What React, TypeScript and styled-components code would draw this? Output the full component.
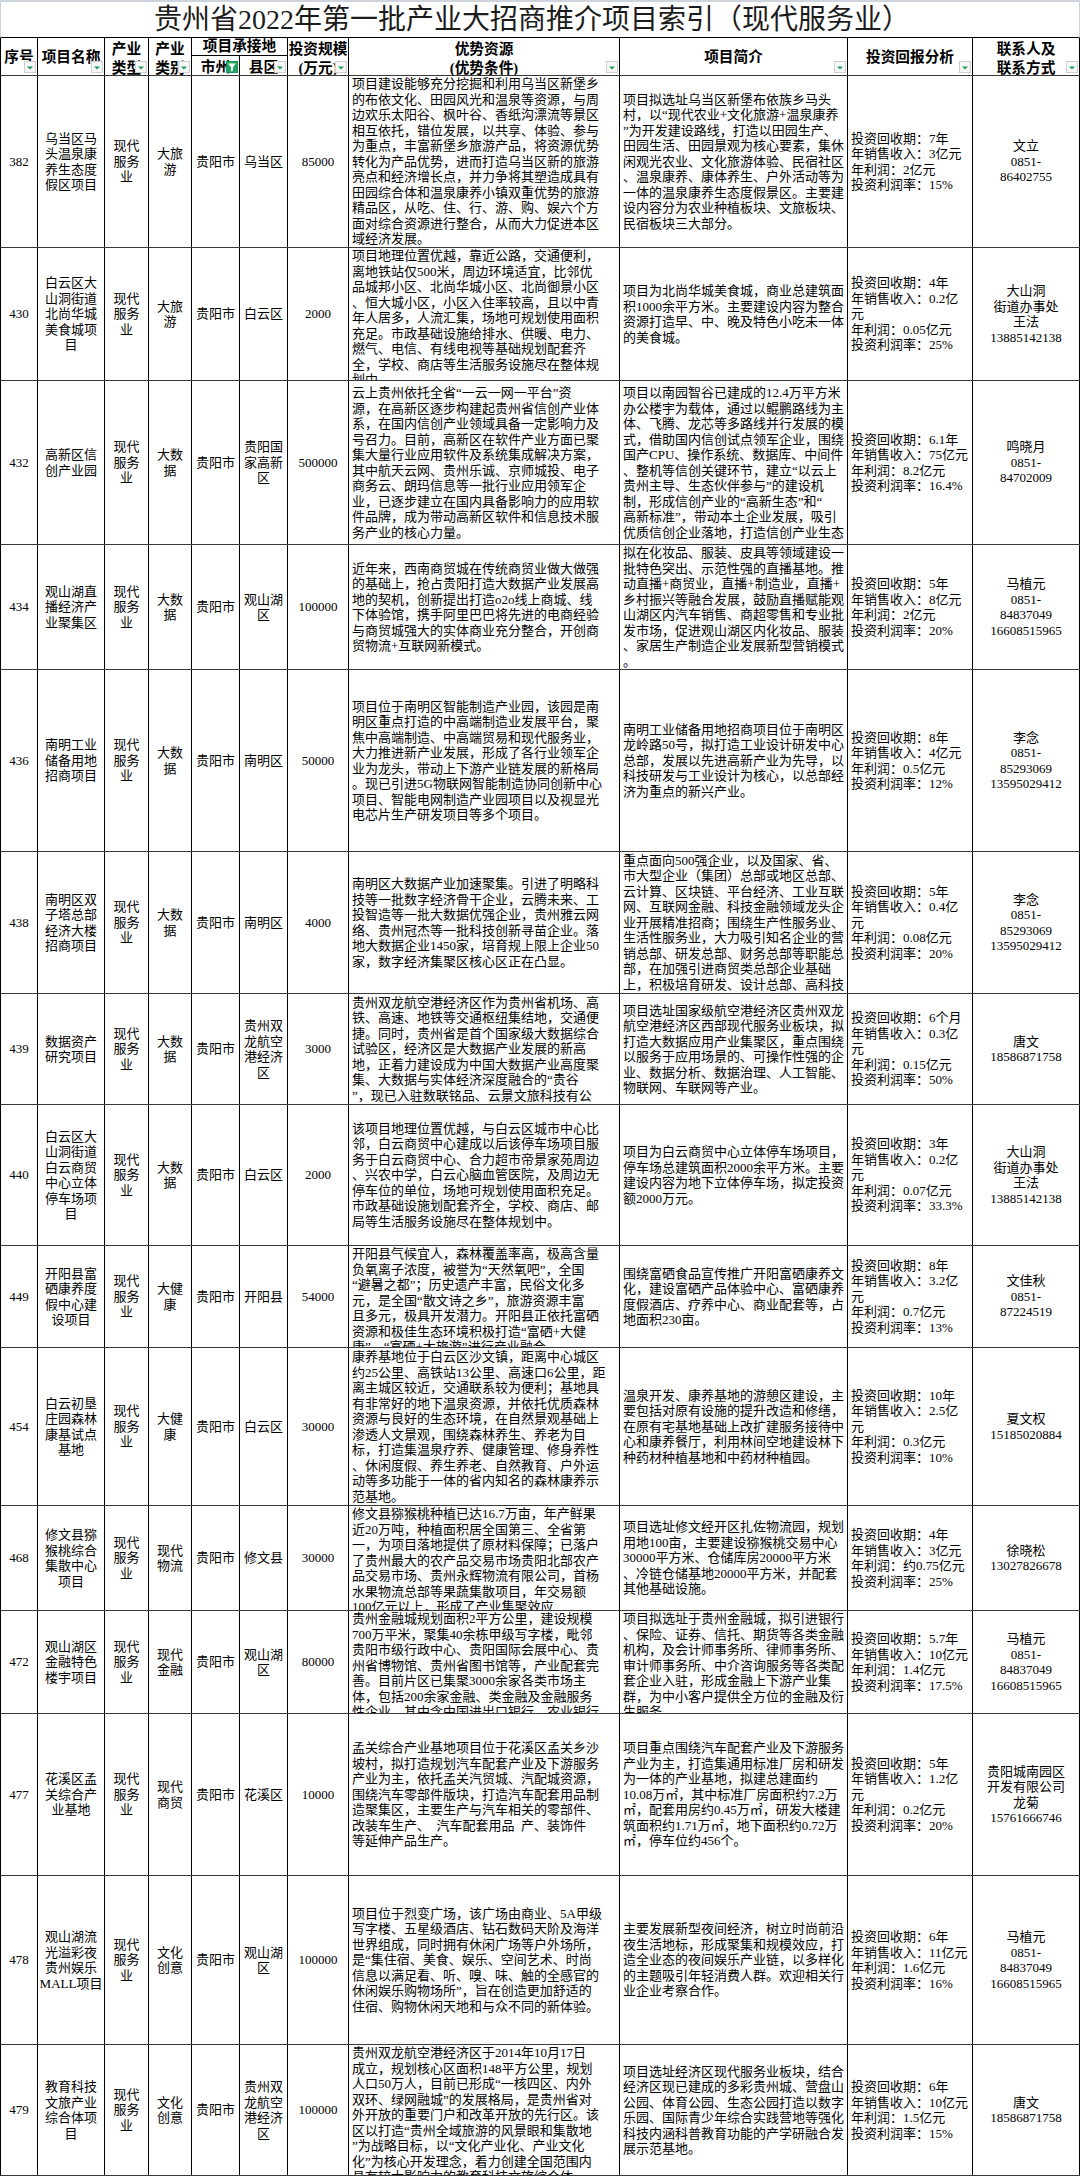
import React from 'react';
import styled, { createGlobalStyle } from 'styled-components';

const GlobalStyle = createGlobalStyle`
  html, body {
    margin: 0;
    padding: 0;
    background: #fff;
  }
  body {
    font-family: "Liberation Serif", "Noto Sans CJK SC", serif;
    color: #000;
  }
`;

const COLS = '37px 67px 44px 43px 48px 48px 61px 271px 228px 125px 107px';

interface RowData {
  no: string;
  h: number;
  name: string;
  type: string;
  cat: string;
  city: string;
  county: string;
  scale: string;
  adv: string[];
  intro: string[];
  ret: string[];
  contact: string;
}

const SVC = '现代\n服务\n业';

const rows: RowData[] = [
  {
    no: '382', h: 172, name: '乌当区马\n头温泉康\n养生态度\n假区项目', type: SVC, cat: '大旅\n游',
    city: '贵阳市', county: '乌当区', scale: '85000',
    adv: [
      '项目建设能够充分挖掘和利用乌当区新堡乡',
      '的布依文化、田园风光和温泉等资源，与周',
      '边欢乐太阳谷、枫叶谷、香纸沟漂流等景区',
      '相互依托，错位发展，以共享、体验、参与',
      '为重点，丰富新堡乡旅游产品，将资源优势',
      '转化为产品优势，进而打造乌当区新的旅游',
      '亮点和经济增长点，并力争将其塑造成具有',
      '田园综合体和温泉康养小镇双重优势的旅游',
      '精品区，从吃、住、行、游、购、娱六个方',
      '面对综合资源进行整合，从而大力促进本区',
      '域经济发展。',
    ],
    intro: [
      '项目拟选址乌当区新堡布依族乡马头',
      '村，以“现代农业+文化旅游+温泉康养',
      '”为开发建设路线，打造以田园生产、',
      '田园生活、田园景观为核心要素，集休',
      '闲观光农业、文化旅游体验、民宿社区',
      '、温泉康养、康体养生、户外活动等为',
      '一体的温泉康养生态度假景区。主要建',
      '设内容分为农业种植板块、文旅板块、',
      '民宿板块三大部分。',
    ],
    ret: ['投资回收期：7年', '年销售收入：3亿元', '年利润：2亿元', '投资利润率：15%'],
    contact: '文立\n0851-\n86402755',
  },
  {
    no: '430', h: 133, name: '白云区大\n山洞街道\n北尚华城\n美食城项\n目', type: SVC, cat: '大旅\n游',
    city: '贵阳市', county: '白云区', scale: '2000',
    adv: [
      '项目地理位置优越，靠近公路，交通便利，',
      '离地铁站仅500米，周边环境适宜，比邻优',
      '品城邦小区、北尚华城小区、北尚御景小区',
      '、恒大城小区，小区入住率较高，且以中青',
      '年人居多，人流汇集，场地可规划使用面积',
      '充足。市政基础设施给排水、供暖、电力、',
      '燃气、电信、有线电视等基础规划配套齐',
      '全，学校、商店等生活服务设施尽在整体规',
      '划中。',
    ],
    intro: [
      '项目为北尚华城美食城，商业总建筑面',
      '积1000余平方米。主要建设内容为整合',
      '资源打造早、中、晚及特色小吃未一体',
      '的美食城。',
    ],
    ret: ['投资回收期：4年', '年销售收入：0.2亿', '元', '年利润：0.05亿元', '投资利润率：25%'],
    contact: '大山洞\n街道办事处\n王法\n13885142138',
  },
  {
    no: '432', h: 164, name: '高新区信\n创产业园', type: SVC, cat: '大数\n据',
    city: '贵阳市', county: '贵阳国\n家高新\n区', scale: '500000',
    adv: [
      '云上贵州依托全省“一云一网一平台”资',
      '源，在高新区逐步构建起贵州省信创产业体',
      '系，在国内信创产业领域具备一定影响力及',
      '号召力。目前，高新区在软件产业方面已聚',
      '集大量行业应用软件及系统集成解决方案，',
      '其中航天云网、贵州乐诚、京师城投、电子',
      '商务云、朗玛信息等一批行业应用领军企',
      '业，已逐步建立在国内具备影响力的应用软',
      '件品牌，成为带动高新区软件和信息技术服',
      '务产业的核心力量。',
    ],
    intro: [
      '项目以南园智谷已建成的12.4万平方米',
      '办公楼宇为载体，通过以鲲鹏路线为主',
      '体、飞腾、龙芯等多路线并行发展的模',
      '式，借助国内信创试点领军企业，围绕',
      '国产CPU、操作系统、数据库、中间件',
      '、整机等信创关键环节，建立“以云上',
      '贵州主导、生态伙伴参与”的建设机',
      '制，形成信创产业的“高新生态”和“',
      '高新标准”，带动本土企业发展，吸引',
      '优质信创企业落地，打造信创产业生态',
    ],
    ret: ['投资回收期：6.1年', '年销售收入：75亿元', '年利润：8.2亿元', '投资利润率：16.4%'],
    contact: '鸣晓月\n0851-\n84702009',
  },
  {
    no: '434', h: 125, name: '观山湖直\n播经济产\n业聚集区', type: SVC, cat: '大数\n据',
    city: '贵阳市', county: '观山湖\n区', scale: '100000',
    adv: [
      '近年来，西南商贸城在传统商贸业做大做强',
      '的基础上，抢占贵阳打造大数据产业发展高',
      '地的契机，创新提出打造o2o线上商城、线',
      '下体验馆，携手阿里巴巴将先进的电商经验',
      '与商贸城强大的实体商业充分整合，开创商',
      '贸物流+互联网新模式。',
    ],
    intro: [
      '拟在化妆品、服装、皮具等领域建设一',
      '批特色突出、示范性强的直播基地。推',
      '动直播+商贸业，直播+制造业，直播+',
      '乡村振兴等融合发展，鼓励直播赋能观',
      '山湖区内汽车销售、商超零售和专业批',
      '发市场，促进观山湖区内化妆品、服装',
      '、家居生产制造企业发展新型营销模式',
      '。',
    ],
    ret: ['投资回收期：5年', '年销售收入：8亿元', '年利润：2亿元', '投资利润率：20%'],
    contact: '马植元\n0851-\n84837049\n16608515965',
  },
  {
    no: '436', h: 182, name: '南明工业\n储备用地\n招商项目', type: SVC, cat: '大数\n据',
    city: '贵阳市', county: '南明区', scale: '50000',
    adv: [
      '项目位于南明区智能制造产业园，该园是南',
      '明区重点打造的中高端制造业发展平台，聚',
      '焦中高端制造、中高端贸易和现代服务业，',
      '大力推进新产业发展，形成了各行业领军企',
      '业为龙头，带动上下游产业链发展的新格局',
      '。现已引进5G物联网智能制造协同创新中心',
      '项目、智能电网制造产业园项目以及视显光',
      '电芯片生产研发项目等多个项目。',
    ],
    intro: [
      '南明工业储备用地招商项目位于南明区',
      '龙岭路50号，拟打造工业设计研发中心',
      '总部，发展以先进高新产业为先导，以',
      '科技研发与工业设计为核心，以总部经',
      '济为重点的新兴产业。',
    ],
    ret: ['投资回收期：8年', '年销售收入：4亿元', '年利润：0.5亿元', '投资利润率：12%'],
    contact: '李念\n0851-\n85293069\n13595029412',
  },
  {
    no: '438', h: 142, name: '南明区双\n子塔总部\n经济大楼\n招商项目', type: SVC, cat: '大数\n据',
    city: '贵阳市', county: '南明区', scale: '4000',
    adv: [
      '南明区大数据产业加速聚集。引进了明略科',
      '技等一批数字经济骨干企业，云腾未来、工',
      '投智造等一批大数据优强企业，贵州雅云网',
      '络、贵州冠杰等一批科技创新寻苗企业。落',
      '地大数据企业1450家，培育规上限上企业50',
      '家，数字经济集聚区核心区正在凸显。',
    ],
    intro: [
      '重点面向500强企业，以及国家、省、',
      '市大型企业（集团）总部或地区总部、',
      '云计算、区块链、平台经济、工业互联',
      '网、互联网金融、科技金融领域龙头企',
      '业开展精准招商；围绕生产性服务业、',
      '生活性服务业，大力吸引知名企业的营',
      '销总部、研发总部、财务总部等职能总',
      '部，在加强引进商贸类总部企业基础',
      '上，积极培育研发、设计总部、高科技',
    ],
    ret: ['投资回收期：5年', '年销售收入：0.4亿', '元', '年利润：0.08亿元', '投资利润率：20%'],
    contact: '李念\n0851-\n85293069\n13595029412',
  },
  {
    no: '439', h: 111, name: '数据资产\n研究项目', type: SVC, cat: '大数\n据',
    city: '贵阳市', county: '贵州双\n龙航空\n港经济\n区', scale: '3000',
    adv: [
      '贵州双龙航空港经济区作为贵州省机场、高',
      '铁、高速、地铁等交通枢纽集结地，交通便',
      '捷。同时，贵州省是首个国家级大数据综合',
      '试验区，经济区是大数据产业发展的新高',
      '地，正着力建设成为中国大数据产业高度聚',
      '集、大数据与实体经济深度融合的“贵谷',
      '”，现已入驻数联铭品、云景文旅科技有公',
    ],
    intro: [
      '项目选址国家级航空港经济区贵州双龙',
      '航空港经济区西部现代服务业板块，拟',
      '打造大数据应用产业集聚区，重点围绕',
      '以服务于应用场景的、可操作性强的企',
      '业、数据分析、数据治理、人工智能、',
      '物联网、车联网等产业。',
    ],
    ret: ['投资回收期：6个月', '年销售收入：0.3亿', '元', '年利润：0.15亿元', '投资利润率：50%'],
    contact: '唐文\n18586871758',
  },
  {
    no: '440', h: 141, name: '白云区大\n山洞街道\n白云商贸\n中心立体\n停车场项\n目', type: SVC, cat: '大数\n据',
    city: '贵阳市', county: '白云区', scale: '2000',
    adv: [
      '该项目地理位置优越，与白云区城市中心比',
      '邻，白云商贸中心建成以后该停车场项目服',
      '务于白云商贸中心、合力超市帝景家苑周边',
      '、兴农中学，白云心脑血管医院，及周边无',
      '停车位的单位，场地可规划使用面积充足。',
      '市政基础设施划配套齐全，学校、商店、邮',
      '局等生活服务设施尽在整体规划中。',
    ],
    intro: [
      '项目为白云商贸中心立体停车场项目，',
      '停车场总建筑面积2000余平方米。主要',
      '建设内容为地下立体停车场，拟定投资',
      '额2000万元。',
    ],
    ret: ['投资回收期：3年', '年销售收入：0.2亿', '元', '年利润：0.07亿元', '投资利润率：33.3%'],
    contact: '大山洞\n街道办事处\n王法\n13885142138',
  },
  {
    no: '449', h: 102, name: '开阳县富\n硒康养度\n假中心建\n设项目', type: SVC, cat: '大健\n康',
    city: '贵阳市', county: '开阳县', scale: '54000',
    adv: [
      '开阳县气候宜人，森林覆盖率高，极高含量',
      '负氧离子浓度，被誉为“天然氧吧”，全国',
      '“避暑之都”；历史遗产丰富，民俗文化多',
      '元，是全国“散文诗之乡”，旅游资源丰富',
      '且多元，极具开发潜力。开阳县正依托富硒',
      '资源和极佳生态环境积极打造“富硒+大健',
      '康”、“富硒+大旅游”进行产业融合',
    ],
    intro: [
      '围绕富硒食品宣传推广开阳富硒康养文',
      '化，建设富硒产品体验中心、富硒康养',
      '度假酒店、疗养中心、商业配套等，占',
      '地面积230亩。',
    ],
    ret: ['投资回收期：8年', '年销售收入：3.2亿', '元', '年利润：0.7亿元', '投资利润率：13%'],
    contact: '文佳秋\n0851-\n87224519',
  },
  {
    no: '454', h: 158, name: '白云初垦\n庄园森林\n康基试点\n基地', type: SVC, cat: '大健\n康',
    city: '贵阳市', county: '白云区', scale: '30000',
    adv: [
      '康养基地位于白云区沙文镇，距离中心城区',
      '约25公里、高铁站13公里、高速口6公里，距',
      '离主城区较近，交通联系较为便利；基地具',
      '有非常好的地下温泉资源，并依托优质森林',
      '资源与良好的生态环境，在自然景观基础上',
      '渗透人文景观，围绕森林养生、养老为目',
      '标，打造集温泉疗养、健康管理、修身养性',
      '、休闲度假、养生养老、自然教育、户外运',
      '动等多功能于一体的省内知名的森林康养示',
      '范基地。',
    ],
    intro: [
      '温泉开发、康养基地的游憩区建设，主',
      '要包括对原有设施的提升改造和修缮，',
      '在原有宅基地基础上改扩建服务接待中',
      '心和康养餐厅，利用林间空地建设林下',
      '种药材种植基地和中药材种植园。',
    ],
    ret: ['投资回收期：10年', '年销售收入：2.5亿', '元', '年利润：0.3亿元', '投资利润率：10%'],
    contact: '夏文权\n15185020884',
  },
  {
    no: '468', h: 105, name: '修文县猕\n猴桃综合\n集散中心\n项目', type: SVC, cat: '现代\n物流',
    city: '贵阳市', county: '修文县', scale: '30000',
    adv: [
      '修文县猕猴桃种植已达16.7万亩，年产鲜果',
      '近20万吨，种植面积居全国第三、全省第',
      '一，为项目落地提供了原材料保障；已落户',
      '了贵州最大的农产品交易市场贵阳北部农产',
      '品交易市场、贵州永辉物流有限公司，首杨',
      '水果物流总部等果蔬集散项目，年交易额',
      '100亿元以上，形成了产业集聚效应',
    ],
    intro: [
      '项目选址修文经开区扎佐物流园，规划',
      '用地100亩，主要建设猕猴桃交易中心',
      '30000平方米、仓储库房20000平方米',
      '、冷链仓储基地20000平方米，并配套',
      '其他基础设施。',
    ],
    ret: ['投资回收期：4年', '年销售收入：3亿元', '年利润：约0.75亿元', '投资利润率：25%'],
    contact: '徐晓松\n13027826678',
  },
  {
    no: '472', h: 103, name: '观山湖区\n金融特色\n楼宇项目', type: SVC, cat: '现代\n金融',
    city: '贵阳市', county: '观山湖\n区', scale: '80000',
    adv: [
      '贵州金融城规划面积2平方公里，建设规模',
      '700万平米，聚集40余栋甲级写字楼，毗邻',
      '贵阳市级行政中心、贵阳国际会展中心、贵',
      '州省博物馆、贵州省图书馆等，产业配套完',
      '善。目前片区已集聚3000余家各类市场主',
      '体，包括200余家金融、类金融及金融服务',
      '性企业，其中含中国进出口银行、农业银行',
    ],
    intro: [
      '项目拟选址于贵州金融城，拟引进银行',
      '、保险、证券、信托、期货等各类金融',
      '机构，及会计师事务所、律师事务所、',
      '审计师事务所、中介咨询服务等各类配',
      '套企业入驻，形成金融上下游产业集',
      '群，为中小客户提供全方位的金融及衍',
      '生服务。',
    ],
    ret: ['投资回收期：5.7年', '年销售收入：10亿元', '年利润：1.4亿元', '投资利润率：17.5%'],
    contact: '马植元\n0851-\n84837049\n16608515965',
  },
  {
    no: '477', h: 162, name: '花溪区孟\n关综合产\n业基地', type: SVC, cat: '现代\n商贸',
    city: '贵阳市', county: '花溪区', scale: '10000',
    adv: [
      '孟关综合产业基地项目位于花溪区孟关乡沙',
      '坡村，拟打造规划汽车配套产业及下游服务',
      '产业为主，依托孟关汽贸城、汽配城资源，',
      '围绕汽车零部件版块，打造汽车配套用品制',
      '造聚集区，主要生产与汽车相关的零部件、',
      '改装车生产、  汽车配套用品  产、装饰件',
      '等延伸产品生产。',
    ],
    intro: [
      '项目重点围绕汽车配套产业及下游服务',
      '产业为主，打造集通用标准厂房和研发',
      '为一体的产业基地，拟建总建面约',
      '10.08万㎡，其中标准厂房面积约7.2万',
      '㎡，配套用房约0.45万㎡，研发大楼建',
      '筑面积约1.71万㎡，地下面积约0.72万',
      '㎡，停车位约456个。',
    ],
    ret: ['投资回收期：5年', '年销售收入：1.2亿', '元', '年利润：0.2亿元', '投资利润率：20%'],
    contact: '贵阳城南园区\n开发有限公司\n龙菊\n15761666746',
  },
  {
    no: '478', h: 169, name: '观山湖流\n光溢彩夜\n贵州娱乐\nMALL项目', type: SVC, cat: '文化\n创意',
    city: '贵阳市', county: '观山湖\n区', scale: '100000',
    adv: [
      '项目位于烈变广场，该广场由商业、5A甲级',
      '写字楼、五星级酒店、钻石数码天阶及海洋',
      '世界组成，同时拥有休闲广场等户外场所，',
      '是“集住宿、美食、娱乐、空间艺术、时尚',
      '信息以满足看、听、嗅、味、触的全感官的',
      '休闲娱乐购物场所”，旨在创造更加舒适的',
      '住宿、购物休闲天地和与众不同的新体验。',
    ],
    intro: [
      '主要发展新型夜间经济，树立时尚前沿',
      '夜生活地标，形成聚集和规模效应，打',
      '造全业态的夜间娱乐产业链，以多样化',
      '的主题吸引年轻消费人群。欢迎相关行',
      '业企业考察合作。',
    ],
    ret: ['投资回收期：6年', '年销售收入：11亿元', '年利润：1.6亿元', '投资利润率：16%'],
    contact: '马植元\n0851-\n84837049\n16608515965',
  },
  {
    no: '479', h: 131, name: '教育科技\n文旅产业\n综合体项\n目', type: SVC, cat: '文化\n创意',
    city: '贵阳市', county: '贵州双\n龙航空\n港经济\n区', scale: '100000',
    adv: [
      '贵州双龙航空港经济区于2014年10月17日',
      '成立，规划核心区面积148平方公里，规划',
      '人口50万人，目前已形成“一核四区、内外',
      '双环、绿网融城”的发展格局，是贵州省对',
      '外开放的重要门户和改革开放的先行区。该',
      '区以打造“贵州全域旅游的风景眼和集散地',
      '”为战略目标，以“文化产业化、产业文化',
      '化”为核心开发理念，着力创建全国范围内',
      '具有较大影响力的教育科技文旅综合体。',
    ],
    intro: [
      '项目选址经济区现代服务业板块，结合',
      '经济区现已建成的多彩贵州城、营盘山',
      '公园、体育公园、生态公园打造以数字',
      '乐园、国际青少年综合实践营地等强化',
      '科技内涵科普教育功能的产学研融合发',
      '展示范基地。',
    ],
    ret: ['投资回收期：6年', '年销售收入：10亿元', '年利润：1.5亿元', '投资利润率：15%'],
    contact: '唐文\n18586871758',
  },
];

const Sheet = styled.div`
  width: 1080px;
  height: 2176px;
  overflow: hidden;
  background: #fff;
`;

const TitleBar = styled.div`
  height: 38px;
  box-sizing: border-box;
  border-top: 2px solid #cdd4de;
  border-left: 1px solid #cdd4de;
  border-right: 1px solid #cdd4de;
  border-bottom: 1px solid #000;
  display: flex;
  align-items: center;
  justify-content: center;
  padding-right: 16px;
  font-size: 28px;
  line-height: 34px;
  color: #1c1c1c;
  white-space: nowrap;
`;

const HeaderRow = styled.div`
  display: grid;
  grid-template-columns: ${COLS};
  grid-template-rows: 18px 19px;
  height: 38px;
  box-sizing: border-box;
  border-left: 1px solid #000;
  border-bottom: 1px solid #3a3a3a;
`;

const HeadCell = styled.div<{ $c: number; $r?: string }>`
  position: relative;
  grid-column: ${(p) => p.$c};
  grid-row: ${(p) => p.$r ?? '1 / span 2'};
  display: flex;
  flex-direction: column;
  align-items: center;
  padding-top: 2px;
  box-sizing: border-box;
  border-right: 1px solid #000;
  overflow: hidden;
  min-width: 0;
  font-weight: 700;
  font-size: 14.67px;
  line-height: 19px;
  text-align: center;
  white-space: pre;
`;

const SpanHead = styled(HeadCell)`
  grid-column: 5 / span 2;
  padding-top: 0;
  line-height: 17px;
  border-bottom: 1px solid #000;
`;

const HeadText = styled.div`
  margin: auto 0;
`;

const FilterBox = styled.span<{ $active?: boolean }>`
  position: absolute;
  right: 1px;
  bottom: 2px;
  width: 12px;
  height: 12px;
  box-sizing: border-box;
  border: 1px solid ${(p) => (p.$active ? '#1b9256' : '#cfcfcf')};
  background: ${(p) => (p.$active ? '#22a463' : '#f6f6f6')};
  display: flex;
  align-items: center;
  justify-content: center;
`;

const Filter: React.FC<{ active?: boolean }> = ({ active }) => (
  <FilterBox $active={active}>
    {active ? (
      <svg width="10" height="10" viewBox="0 0 10 10">
        <path d="M1 1.5h8L6 5v3.6L4 9.5V5z" fill="#fff" />
      </svg>
    ) : (
      <svg width="10" height="10" viewBox="0 0 10 10">
        <polygon points="2,4.5 8,4.5 5,7.5" fill="#1f9e5a" />
      </svg>
    )}
  </FilterBox>
);

const Row = styled.div<{ $h: number }>`
  display: grid;
  grid-template-columns: ${COLS};
  height: ${(p) => p.$h}px;
  box-sizing: border-box;
  border-left: 1px solid #000;
  border-bottom: 1px solid #3a3a3a;
`;

const Cell = styled.div<{ $left?: boolean }>`
  display: flex;
  flex-direction: column;
  align-items: ${(p) => (p.$left ? 'flex-start' : 'center')};
  padding-left: ${(p) => (p.$left ? '3px' : '0')};
  box-sizing: border-box;
  border-right: 1px solid #000;
  overflow: hidden;
  min-width: 0;
  font-size: 13px;
  line-height: 15.5px;
  text-align: ${(p) => (p.$left ? 'left' : 'center')};
`;

const Txt = styled.div`
  margin: auto 0;
  white-space: pre;
`;

const DataRow: React.FC<{ r: RowData }> = ({ r }) => (
  <Row $h={r.h}>
    <Cell><Txt>{r.no}</Txt></Cell>
    <Cell><Txt>{r.name}</Txt></Cell>
    <Cell><Txt>{r.type}</Txt></Cell>
    <Cell><Txt>{r.cat}</Txt></Cell>
    <Cell><Txt>{r.city}</Txt></Cell>
    <Cell><Txt>{r.county}</Txt></Cell>
    <Cell><Txt>{r.scale}</Txt></Cell>
    <Cell $left><Txt>{r.adv.join('\n')}</Txt></Cell>
    <Cell $left><Txt>{r.intro.join('\n')}</Txt></Cell>
    <Cell $left><Txt>{r.ret.join('\n')}</Txt></Cell>
    <Cell><Txt>{r.contact}</Txt></Cell>
  </Row>
);

const App: React.FC = () => (
  <>
    <GlobalStyle />
    <Sheet>
      <TitleBar>贵州省2022年第一批产业大招商推介项目索引（现代服务业）</TitleBar>
      <HeaderRow>
        <HeadCell $c={1}><HeadText>序号</HeadText><Filter /></HeadCell>
        <HeadCell $c={2}><HeadText>项目名称</HeadText><Filter /></HeadCell>
        <HeadCell $c={3}><HeadText>{'产业\n类型'}</HeadText><Filter /></HeadCell>
        <HeadCell $c={4}><HeadText>{'产业\n类别'}</HeadText><Filter /></HeadCell>
        <SpanHead $c={5} $r="1"><HeadText>项目承接地</HeadText></SpanHead>
        <HeadCell $c={5} $r="2"><HeadText>市州</HeadText><Filter active /></HeadCell>
        <HeadCell $c={6} $r="2"><HeadText>县区</HeadText><Filter /></HeadCell>
        <HeadCell $c={7}><HeadText>{'投资规模\n(万元)'}</HeadText><Filter /></HeadCell>
        <HeadCell $c={8}><HeadText>{'优势资源\n(优势条件)'}</HeadText><Filter /></HeadCell>
        <HeadCell $c={9}><HeadText>项目简介</HeadText><Filter /></HeadCell>
        <HeadCell $c={10}><HeadText>投资回报分析</HeadText><Filter /></HeadCell>
        <HeadCell $c={11}><HeadText>{'联系人及\n联系方式'}</HeadText><Filter /></HeadCell>
      </HeaderRow>
      {rows.map((r) => (
        <DataRow key={r.no} r={r} />
      ))}
    </Sheet>
  </>
);

export default App;
